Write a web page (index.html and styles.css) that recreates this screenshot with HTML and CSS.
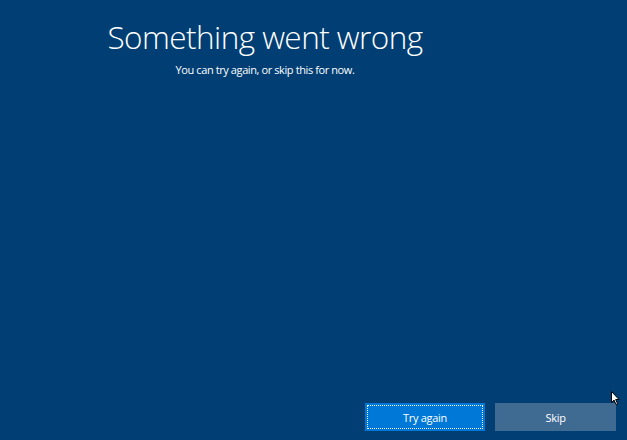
FILE: index.html
```html
<!DOCTYPE html>
<html lang="en">
<head>
<meta charset="utf-8">
<title>Something went wrong</title>
<link rel="stylesheet" href="styles.css">
</head>
<body>
<div class="page">
  <header class="head">
    <h1 class="title">Something went wrong</h1>
    <p class="sub">You can try again, or skip this for now.</p>
  </header>
  <footer class="actions">
    <button class="btn primary">Try again</button>
    <button class="btn secondary">Skip</button>
  </footer>
</div>
<svg class="cursor" width="10" height="15" viewBox="0 0 10 15">
  <path d="M0.5 0.5 L0.5 11.5 L3 9 L5 13.5 L6.6 12.8 L4.7 8.5 L8 8.5 Z" fill="#fff" stroke="#000" stroke-width="1" stroke-linejoin="round"/>
</svg>
</body>
</html>
```
FILE: styles.css
```css
html, body {
  margin: 0;
  padding: 0;
  height: 100%;
}
body {
  background: #003e73;
  color: #ffffff;
  font-family: "Open Sans", "Noto Sans", sans-serif;
  overflow: hidden;
}
.page {
  height: 100%;
  display: flex;
  flex-direction: column;
  justify-content: space-between;
}
.head {
  width: 530px;
  text-align: center;
  padding-top: 17px;
}
.title {
  margin: 0;
  font-weight: 300;
  font-size: 31.5px;
  line-height: 40px;
  letter-spacing: -0.55px;
}
.sub {
  margin: 6px 0 0;
  font-size: 11px;
  line-height: 14px;
  letter-spacing: -0.4px;
}
.actions {
  display: flex;
  justify-content: flex-end;
  gap: 10px;
  padding: 0 11px 9px 0;
}
.btn {
  height: 28px;
  border: 0;
  margin: 0;
  padding: 0;
  color: #fff;
  font-family: "Open Sans", "Noto Sans", sans-serif;
  font-size: 11px;
  letter-spacing: -0.3px;
}
.primary {
  width: 120px;
  background: #0078d7;
  outline: 1px dotted #ffffff;
  outline-offset: -3px;
}
.secondary {
  width: 121px;
  background: #3f6b93;
}
.cursor {
  position: absolute;
  left: 611px;
  top: 391px;
}
```
